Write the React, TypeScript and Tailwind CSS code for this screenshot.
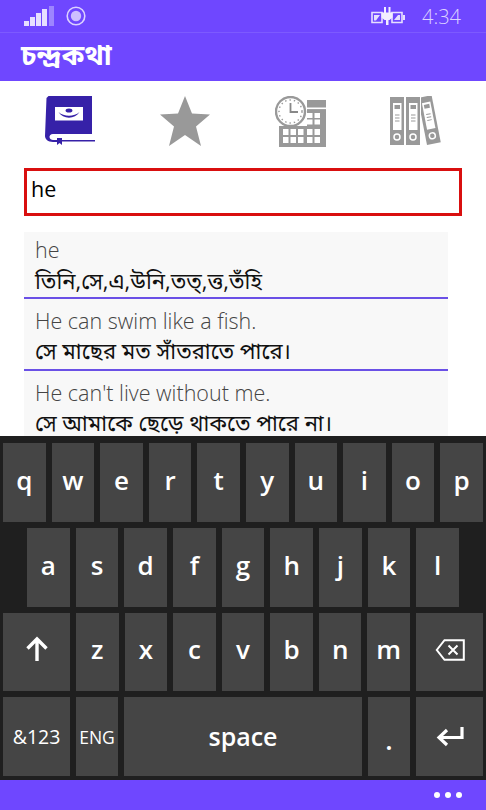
const row1 = ["q", "w", "e", "r", "t", "y", "u", "i", "o", "p"];
const row2 = ["a", "s", "d", "f", "g", "h", "j", "k", "l"];
const row3 = ["z", "x", "c", "v", "b", "n", "m"];

const results = [
  { en: "he", bn: "তিনি,সে,এ,উনি,তত্,ত্ত,তঁহি" },
  { en: "He can swim like a fish.", bn: "সে মাছের মত সাঁতরাতে পারে।" },
  { en: "He can't live without me.", bn: "সে আমাকে ছেড়ে থাকতে পারে না।" },
];

function SignalIcon() {
  return (
    <svg width="32" height="21" viewBox="0 0 32 21">
      <rect x="0" y="15" width="5" height="5" fill="#e6dfff" />
      <rect x="6" y="11" width="5" height="9" fill="#e6dfff" />
      <rect x="12" y="7" width="5" height="13" fill="#e6dfff" />
      <rect x="18" y="3" width="5" height="17" fill="#e6dfff" />
      <rect x="25" y="0" width="5" height="20" fill="#9d85ff" />
    </svg>
  );
}

function RingIcon() {
  return (
    <svg width="20" height="20" viewBox="0 0 20 20">
      <circle cx="10" cy="10" r="8.8" fill="none" stroke="#dcd2ff" strokeWidth="1.6" />
      <circle cx="10" cy="10" r="5.2" fill="#cdbfff" />
    </svg>
  );
}

function BatteryIcon() {
  return (
    <svg width="34" height="18" viewBox="0 0 34 18">
      <path d="M1 5.5H11V15.5H1ZM21 5.5H31V15.5H21Z" fill="none" stroke="#e6dfff" strokeWidth="1.6" />
      <path d="M3 8H9L5 13.5H3ZM23 13H29V8H27Z" fill="#e6dfff" />
      <rect x="32" y="8" width="2" height="5" fill="#e6dfff" />
      <path d="M10.5 5.5H21.5V10.5L18.5 13H17.5V18H15V13H13.5L10.5 10.5ZM13 0H15V5.5H13ZM17.5 0H19.5V5.5H17.5Z" fill="#f2eeff" />
    </svg>
  );
}

function BookIcon() {
  return (
    <svg width="50" height="50" viewBox="0 0 50 50">
      <path d="M3.5 0H47V38H8C5.5 38 4.5 39.5 4.5 41C4.5 43 6.5 44 8 44H13V46H8C3 46 0 43 0 40L1.5 2Z" fill="#3621a8" />
      <rect x="10" y="11" width="28" height="13.5" fill="#fff" />
      <ellipse cx="24" cy="14.5" rx="3.4" ry="2" fill="#3621a8" />
      <path d="M13.5 16C19 21 29 21 34.5 16C30 23.5 18 23.5 13.5 16Z" fill="#3621a8" />
      <rect x="17" y="44" width="33" height="1.5" fill="#3621a8" />
      <path d="M12 42H17V49L14.5 47L12 49Z" fill="#3621a8" />
    </svg>
  );
}

function StarIcon() {
  return (
    <svg width="50" height="50" viewBox="0 0 50 50">
      <path d="M25 0L32 17.5L50 18.5L36 30.5L41 50L25 39L9 50L14 30.5L0 18.5L18 17.5Z" fill="#999" />
    </svg>
  );
}

function CalendarIcon() {
  const cells = [
    [32, 17],
    [39.5, 17],
    [32, 23.5],
    [39.5, 23.5],
  ];
  const bottom = [8, 15.5, 23, 32, 39.5];
  return (
    <svg width="52" height="52" viewBox="0 0 52 52">
      <rect x="4" y="4" width="47" height="47" fill="#999" />
      <rect x="4" y="0" width="28" height="30" fill="#fff" />
      <rect x="30" y="11.5" width="21" height="1.6" fill="#fff" />
      {cells.map(([x, y]) => (
        <rect key={`${x}-${y}`} x={x} y={y} width="5.5" height="5" fill="#fff" />
      ))}
      {bottom.map((x) => (
        <rect key={`a${x}`} x={x} y="33" width="5.5" height="6" fill="#fff" />
      ))}
      {bottom.map((x) => (
        <rect key={`b${x}`} x={x} y="41" width="5.5" height="6" fill="#fff" />
      ))}
      <circle cx="15.5" cy="15.5" r="14.5" fill="#fff" stroke="#999" strokeWidth="2.4" />
      <circle cx="15.5" cy="15.5" r="11.5" fill="none" stroke="#999" strokeWidth="1.4" strokeDasharray="1.4 3" />
      <path d="M15.5 7V16H23" fill="none" stroke="#888" strokeWidth="1.8" />
    </svg>
  );
}

function Binder({ x }: { x: number }) {
  return (
    <g transform={`translate(${x} 0)`}>
      <rect x="0" y="1" width="14" height="48" fill="#999" />
      <rect x="3" y="7" width="8.5" height="27" fill="#fff" />
      <rect x="4.5" y="9" width="5.5" height="4" fill="#999" />
      <path d="M5 19h4.5M5 22h4.5M5 25h4.5" stroke="#999" strokeWidth="1" />
      <circle cx="7" cy="41" r="3" fill="none" stroke="#fff" strokeWidth="1.5" />
    </g>
  );
}

function BindersIcon() {
  return (
    <svg width="52" height="52" viewBox="0 0 52 52">
      <g transform="rotate(-11 37 49)">
        <Binder x={37} />
      </g>
      <rect x="15" y="0" width="16" height="50" fill="#fff" />
      <Binder x={0} />
      <Binder x={16} />
    </svg>
  );
}

function ShiftIcon() {
  return (
    <svg width="24" height="26" viewBox="0 0 24 26">
      <path d="M12 25V3M2.5 12.5L12 3L21.5 12.5" fill="none" stroke="#fff" strokeWidth="3.4" />
    </svg>
  );
}

function BackspaceIcon() {
  return (
    <svg width="30" height="22" viewBox="0 0 30 22">
      <path d="M28.8 1.2H9.5L1.8 11L9.5 20.8H28.8Z" fill="none" stroke="#fff" strokeWidth="2" />
      <path d="M13.5 6.5L22.5 15.5M22.5 6.5L13.5 15.5" fill="none" stroke="#fff" strokeWidth="2" />
    </svg>
  );
}

function EnterIcon() {
  return (
    <svg width="28" height="20" viewBox="0 0 28 20">
      <path d="M26 0V10.5H4M11 3L3 10.5L11 18" fill="none" stroke="#fff" strokeWidth="3.2" />
    </svg>
  );
}

function Key({ label }: { label: string }) {
  return (
    <div className="flex flex-1 items-center justify-center bg-[#454545] pb-1 text-[26px] font-semibold text-white">
      {label}
    </div>
  );
}

export default function App() {
  return (
    <div className="flex h-[810px] w-[486px] flex-col overflow-hidden bg-white font-['Open_Sans','Noto_Sans','Noto_Sans_Bengali',sans-serif]">
      <div className="bg-[#6f47ff]">
        <div className="flex h-[33px] items-center border-b border-[#7d5aff] pl-6 pr-[25px]">
          <SignalIcon />
          <div className="ml-2.5">
            <RingIcon />
          </div>
          <div className="ml-auto">
            <BatteryIcon />
          </div>
          <span className="ml-[17px] pt-0.5 text-[20px] font-light text-[#dcd2ff]">4:34</span>
        </div>
        <div className="flex h-12 items-center pb-1.5 pl-[21px] text-[28px] font-bold text-white">চন্দ্রকথা</div>
      </div>

      <div className="grid grid-cols-4 px-3 pt-[15px]">
        <div className="flex justify-center"><BookIcon /></div>
        <div className="flex justify-center"><StarIcon /></div>
        <div className="flex justify-center"><CalendarIcon /></div>
        <div className="flex justify-center"><BindersIcon /></div>
      </div>

      <div className="mx-6 mt-5 flex h-[48px] items-center border-[3px] border-[#d90f0f] pb-1.5 pl-[4px] text-[21.5px] font-normal text-black">
        he
      </div>

      <div className="mt-4 mr-[38px] ml-6 min-h-0 flex-1 overflow-hidden bg-[#f8f8f8]">
        {results.map((item, i) => (
          <div key={item.en} className={i === 0 ? "h-[67px] border-b-2 border-[#6a50e6] pl-[11px]" : "h-[72px] border-b-2 border-[#6a50e6] pl-[11px]"}>
            <div className={i === 0 ? "h-[34px] pt-[2px] text-[21.5px] leading-[32px] font-light text-[#444]" : "h-[37px] pt-[6px] text-[21.5px] leading-[32px] font-light text-[#444]"}>
              {item.en}
            </div>
            <div className="text-[22px] leading-[28px] text-[#111]">{item.bn}</div>
          </div>
        ))}
      </div>

      <div className="flex h-[344px] flex-col gap-[6px] bg-[#1f1f1f] px-[3px] pt-[7px] pb-[4px]">
        <div className="flex flex-1 gap-[6px]">
          {row1.map((k) => (
            <Key key={k} label={k} />
          ))}
        </div>
        <div className="flex flex-1 gap-[6px] px-[24px]">
          {row2.map((k) => (
            <Key key={k} label={k} />
          ))}
        </div>
        <div className="flex flex-1 gap-[6px]">
          <div className="flex w-[67px] items-center justify-center bg-[#454545] pb-1.5">
            <ShiftIcon />
          </div>
          {row3.map((k) => (
            <Key key={k} label={k} />
          ))}
          <div className="flex w-[67px] items-center justify-center bg-[#454545] pb-1">
            <BackspaceIcon />
          </div>
        </div>
        <div className="flex flex-1 gap-[6px]">
          <div className="flex w-[67px] items-center justify-center bg-[#454545] text-[19.5px] font-medium text-white">
            &amp;123
          </div>
          <div className="flex w-[42px] items-center justify-center bg-[#454545] text-[17.5px] font-medium text-white">
            ENG
          </div>
          <div className="flex flex-1 items-center justify-center bg-[#454545] text-[25px] font-semibold text-white">
            space
          </div>
          <div className="flex w-[42px] items-center justify-center bg-[#454545] pt-2 text-[27px] font-semibold text-white">
            .
          </div>
          <div className="flex w-[67px] items-center justify-center bg-[#454545]">
            <EnterIcon />
          </div>
        </div>
      </div>

      <div className="flex h-[30px] items-center justify-end gap-[5px] bg-[#6f47ff] pr-6">
        <span className="size-[6px] rounded-full bg-white" />
        <span className="size-[6px] rounded-full bg-white" />
        <span className="size-[6px] rounded-full bg-white" />
      </div>
    </div>
  );
}
